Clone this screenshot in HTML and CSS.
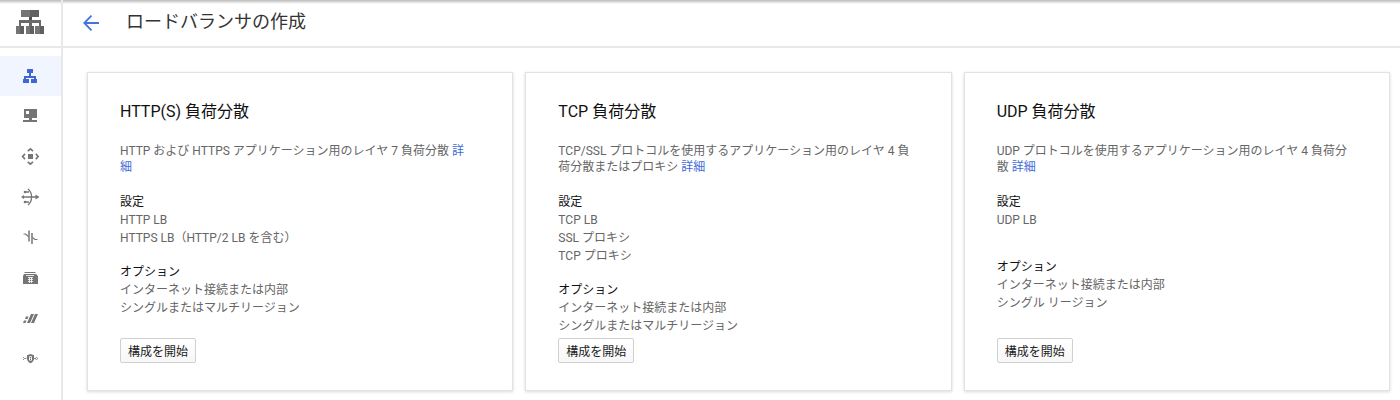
FILE: index.html
```html
<!DOCTYPE html>
<html lang="ja">
<head>
    <meta charset="UTF-8">
    <meta name="viewport" content="width=device-width, initial-scale=1.0">
    <title>ロードバランサの作成</title>
    <link rel="stylesheet" href="styles.css">
</head>
<body>
    <div class="app">
        <aside class="sidebar">
            <a class="logo" href="#" aria-label="ネットワーク サービス">
                <svg width="29" height="24" viewBox="0 0 29 24">
                    <path fill="#757575" d="M5 0h9v7H5z"/>
                    <path fill="#606060" d="M14 0h9v7h-9z"/>
                    <path fill="#505050" d="M13 7h3v3h-3z"/>
                    <path fill="#6a6a6a" d="M3 10h22v6h-2v-3h-7v3h-3v-3H5v3H3z"/>
                    <path fill="#757575" d="M0 16h4v8H0zM10 16h4v8h-4zM19 16h5v8h-5z"/>
                    <path fill="#606060" d="M4 16h4v8H4zM14 16h4v8h-4zM24 16h4v8h-4z"/>
                </svg>
            </a>
            <nav class="nav">
                <div class="nav-group">
                    <a class="nav-item active" href="#" aria-label="負荷分散">
                        <svg width="19" height="18" viewBox="0 0 19 18" fill="currentColor">
                            <path d="M6 2h6v4h-2v3h5v3h1v4h-6v-4h3v-1H5v1h3v4H2v-4h1V9h5V6H6z"/>
                        </svg>
                    </a>
                    <a class="nav-item" href="#" aria-label="Cloud DNS">
                        <svg width="19" height="18" viewBox="0 0 19 18" fill="currentColor">
                            <path fill-rule="evenodd" d="M3 2h13v9H3zM5 4v3h3V4z"/>
                            <path d="M8 11h3v2h5v2H2v-2h6z"/>
                        </svg>
                    </a>
                    <a class="nav-item" href="#" aria-label="Cloud CDN">
                        <svg width="19" height="18" viewBox="0 0 19 18" fill="none" stroke="currentColor" stroke-width="1.6">
                            <path fill="currentColor" stroke="none" d="M7 7h5v5H7z"/>
                            <path d="M6.8 4.2l2.6-2.4L12 4.2M6.8 14.8l2.6 2.4 2.6-2.4M4 6.9L1.6 9.5 4 12.1M14.8 6.9l2.4 2.6-2.4 2.6"/>
                        </svg>
                    </a>
                </div>
                <div class="nav-group">
                    <a class="nav-item" href="#" aria-label="Cloud NAT">
                        <svg width="19" height="18" viewBox="0 0 19 18" fill="none" stroke="currentColor" stroke-width="1.3">
                            <path d="M7 1c4.8 4 4.8 12 0 16M2 9h15M4 4h4M4 14h4"/>
                            <path fill="currentColor" stroke="none" d="M0 9l3-2v4zM18.500 9l-4-2.500v5z"/>
                            <circle cx="4" cy="4" r="1.3" fill="currentColor" stroke="none"/>
                            <circle cx="4" cy="14" r="1.3" fill="currentColor" stroke="none"/>
                        </svg>
                    </a>
                    <a class="nav-item" href="#" aria-label="Traffic Director">
                        <svg width="19" height="18" viewBox="0 0 19 18" fill="none" stroke="currentColor" stroke-width="1.5">
                            <path d="M8 2.500v11M11 5v11" />
                            <path stroke-width="1.2" d="M2.500 6h2l3 2.500M11.500 9.500l2.500 2h2.500"/>
                        </svg>
                    </a>
                </div>
                <div class="nav-group">
                    <a class="nav-item" href="#" aria-label="Service Directory">
                        <svg width="19" height="18" viewBox="0 0 19 18" fill="currentColor">
                            <path d="M4 3h10l1 1H3zM3 5h12l2 2v8H2V7z"/>
                            <path fill="none" stroke="#fff" stroke-width=".8" d="M5 6.500h8M7 8.500h5M8.500 8v6M10.500 8v6M7 10.500h5M7 12.500h5"/>
                        </svg>
                    </a>
                    <a class="nav-item" href="#" aria-label="Cloud Domains">
                        <svg width="19" height="18" viewBox="0 0 19 18" fill="currentColor">
                            <path d="M10 5h3l-4 9H6zM14 5h3l-4 9h-3zM5 7.500h2.500l-1 2.500H4zM3 11.500h2.500l-1 2.500H2z"/>
                        </svg>
                    </a>
                    <a class="nav-item" href="#" aria-label="Private Service Connect">
                        <svg width="19" height="18" viewBox="0 0 19 18" fill="currentColor">
                            <path d="M9.500 5l3.500 1.200v3.300c0 2.200-1.400 3.800-3.500 4.700C7.400 13.300 6 11.700 6 9.500V6.200z"/>
                            <path fill="none" stroke="#fff" stroke-width=".8" d="M8.500 9V7.500h2V9"/>
                            <path fill="#fff" d="M8 9h3v2.500H8z"/>
                            <path d="M9 9.500h1V11H9z"/>
                            <path fill="none" stroke="currentColor" stroke-width=".8" d="M2 8l1.500 1.500L2 11M3.500 9.500h2M13 9.500h1.500"/>
                            <circle cx="15.500" cy="9.500" r="1" fill="none" stroke="currentColor" stroke-width=".7"/>
                        </svg>
                    </a>
                </div>
            </nav>
        </aside>

        <div class="content">
            <header class="header">
                <a class="back" href="#" aria-label="戻る">
                    <svg width="16" height="16" viewBox="0 0 16 16" fill="none" stroke="currentColor" stroke-width="1.8">
                        <path d="M8.500 .7L1.300 8l7.200 7.300M1.500 8H16"/>
                    </svg>
                </a>
                <h1>ロードバランサの作成</h1>
            </header>

            <main class="cards">
                <section class="card">
                    <h2>HTTP(S) 負荷分散</h2>
                    <p class="description">HTTP および HTTPS アプリケーション用のレイヤ 7 負荷分散 <a href="#">詳細</a></p>
                    <div class="settings">
                        <h3>設定</h3>
                        <ul>
                            <li>HTTP LB</li>
                            <li>HTTPS LB（HTTP/2 LB を含む）</li>
                        </ul>
                    </div>
                    <div class="options">
                        <h3>オプション</h3>
                        <ul>
                            <li>インターネット接続または内部</li>
                            <li>シングルまたはマルチリージョン</li>
                        </ul>
                    </div>
                    <button type="button">構成を開始</button>
                </section>

                <section class="card">
                    <h2>TCP 負荷分散</h2>
                    <p class="description">TCP/SSL プロトコルを使用するアプリケーション用のレイヤ 4 負荷分散またはプロキシ <a href="#">詳細</a></p>
                    <div class="settings">
                        <h3>設定</h3>
                        <ul>
                            <li>TCP LB</li>
                            <li>SSL プロキシ</li>
                            <li>TCP プロキシ</li>
                        </ul>
                    </div>
                    <div class="options">
                        <h3>オプション</h3>
                        <ul>
                            <li>インターネット接続または内部</li>
                            <li>シングルまたはマルチリージョン</li>
                        </ul>
                    </div>
                    <button type="button">構成を開始</button>
                </section>

                <section class="card">
                    <h2>UDP 負荷分散</h2>
                    <p class="description">UDP プロトコルを使用するアプリケーション用のレイヤ 4 負荷分散 <a href="#">詳細</a></p>
                    <div class="settings">
                        <h3>設定</h3>
                        <ul>
                            <li>UDP LB</li>
                        </ul>
                    </div>
                    <div class="options">
                        <h3>オプション</h3>
                        <ul>
                            <li>インターネット接続または内部</li>
                            <li>シングル リージョン</li>
                        </ul>
                    </div>
                    <button type="button">構成を開始</button>
                </section>
            </main>
        </div>
    </div>
</body>
</html>
```
FILE: styles.css
```css
* {
    box-sizing: border-box;
}
body {
    margin: 0;
    font-family: Roboto, "Noto Sans CJK JP", sans-serif;
    font-size: 12px;
    color: #666;
    background-color: #fff;
}
h1, h2, h3, p, ul {
    margin: 0;
    padding: 0;
    font-weight: 400;
}
ul {
    list-style: none;
}
a {
    color: #3f6ad8;
    text-decoration: none;
}
svg {
    display: block;
}
.app {
    display: flex;
    min-height: 100vh;
    background: linear-gradient(#bbb, #fff 4px);
}
.sidebar {
    flex: none;
    width: 63px;
    border-right: 2px solid #e8e8e8;
}
.logo {
    display: flex;
    justify-content: center;
    align-items: center;
    height: 48px;
    padding-bottom: 2px;
    border-bottom: 2px solid #e8e8e8;
}
.nav {
    padding-top: 8px;
}
.nav-group + .nav-group {
    margin-top: 1px;
}
.nav-item {
    display: flex;
    justify-content: center;
    align-items: center;
    height: 40px;
    color: #757575;
}
.nav-item.active {
    color: #3f67d2;
    background-color: #f0f5ff;
}
.content {
    flex: 1;
    min-width: 0;
}
.header {
    display: flex;
    align-items: center;
    gap: 27px;
    height: 48px;
    padding-left: 20px;
    border-bottom: 2px solid #e8e8e8;
}
.back {
    color: #4274e0;
}
h1 {
    padding-bottom: 2px;
    font-size: 18px;
    line-height: 24px;
    color: #333;
}
.cards {
    display: grid;
    grid-template-columns: repeat(3, 1fr);
    gap: 12px;
    padding: 24px 10px 8px 24px;
}
.card {
    display: flex;
    flex-direction: column;
    align-items: flex-start;
    padding: 27px 38px 27px 32px;
    border: 1px solid #e2e2e2;
    box-shadow: 0 1px 3px rgba(0, 0, 0, 0.15);
}
h2 {
    font-size: 16px;
    line-height: 24px;
    color: #111;
}
.description {
    margin-top: 19px;
    line-height: 16px;
}
.settings {
    min-height: 49px;
    margin-top: 18px;
    line-height: 18px;
}
.options {
    margin-top: 16px;
    margin-bottom: 3px;
    line-height: 18px;
}
h3 {
    font-size: 12px;
    color: #111;
}
button {
    height: 25px;
    margin-top: auto;
    padding: 0 7px;
    border: 1px solid #d0d0d0;
    border-radius: 2px;
    background: linear-gradient(#fff, #f7f7f7);
    font-family: inherit;
    font-size: 12px;
    color: #212121;
    cursor: pointer;
}
```
